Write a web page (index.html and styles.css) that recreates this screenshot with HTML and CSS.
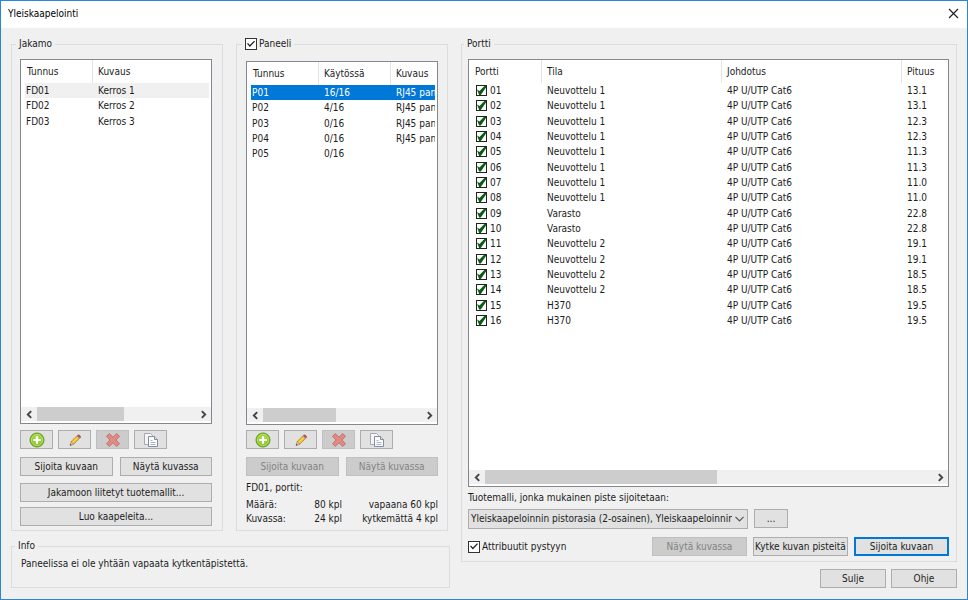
FILE: index.html
```html
<!DOCTYPE html>
<html lang="fi">
<head>
<meta charset="utf-8">
<title>Yleiskaapelointi</title>
<link rel="stylesheet" href="styles.css">
</head>
<body>
<svg class="defs" aria-hidden="true">
  <defs>
    <radialGradient id="green" cx="50%" cy="40%" r="60%">
      <stop offset="0" stop-color="#b4e052"/><stop offset="1" stop-color="#7cb81c"/>
    </radialGradient>
    <symbol id="i-add" viewBox="0 0 16 16">
      <circle cx="8" cy="8" r="7" fill="url(#green)" stroke="#5f9a17"/>
      <circle cx="8" cy="8" r="5.6" fill="none" stroke="#cdeb8b" stroke-width=".7"/>
      <path d="M8 4.2v7.6M4.2 8h7.6" stroke="#fff" stroke-width="2.2" fill="none"/>
    </symbol>
    <symbol id="i-edit" viewBox="0 0 16 16">
      <path d="M3 13.5l1.2-4 2.6 2.6z" fill="#e9cfa2" stroke="#6b5a45" stroke-width=".5"/>
      <path d="M3 13.5l.5-1.6 1.1 1.1z" fill="#333"/>
      <path d="M4.2 9.5L9.8 4l2.6 2.6-5.6 5.5z" fill="#f3bf2d" stroke="#a0700f" stroke-width=".6"/>
      <path d="M5.4 10.7l5.7-5.5" stroke="#fbe58a" stroke-width=".8"/>
      <path d="M9.6 4.2l1-1 2.6 2.6-1 1z" fill="#8d93a0"/>
      <path d="M10.5 3.3c1.2-1.4 4 1 2.8 2.5z" fill="#d9483b" stroke="#9d2f27" stroke-width=".5"/>
    </symbol>
    <symbol id="i-delete" viewBox="0 0 16 16">
      <path d="M4.2 1.6L8 5.2l3.8-3.6 2.7 2.7L10.9 8l3.6 3.7-2.7 2.7L8 10.8l-3.8 3.6-2.7-2.7L5.1 8 1.5 4.3z" fill="#df8a82" stroke="#c4736d" stroke-linejoin="round"/>
    </symbol>
    <symbol id="i-copy" viewBox="0 0 16 16">
      <path d="M1.5 1.5h6l2 2v9h-8z" fill="#f4f5f7" stroke="#a4a8b0"/>
      <path d="M5.5 4.500h6l3 3v7h-9z" fill="#fbfcfe" stroke="#858b98"/>
      <path d="M11.5 4.500v3h3" fill="#dfe3ec" stroke="#858b98"/>
      <path d="M7.5 8.500h2M7.500 10.500h5M7.500 12.500h5" stroke="#a9b4d0"/>
    </symbol>
    <symbol id="i-left" viewBox="0 0 8 8"><path d="M5.5 1L2.500 4l3 3" fill="none" stroke="#444" stroke-width="1.7"/></symbol>
    <symbol id="i-right" viewBox="0 0 8 8"><path d="M2.5 1l3 3-3 3" fill="none" stroke="#444" stroke-width="1.7"/></symbol>
  </defs>
</svg>

<div class="window">
  <header class="titlebar">
    <h1>Yleiskaapelointi</h1>
    <button class="close" type="button" aria-label="Sulje ikkuna">
      <svg width="11" height="11" viewBox="0 0 11 11"><path d="M1 1l9 9M10 1l-9 9" stroke="#222" stroke-width="1.2" fill="none"/></svg>
    </button>
  </header>

  <main class="content">
    <div class="left">
      <div class="groups">
        <fieldset class="group cabinet">
          <legend>Jakamo</legend>
          <div class="list">
            <div class="view">
              <table>
                <colgroup><col class="c-id"><col></colgroup>
                <thead><tr><th>Tunnus</th><th>Kuvaus</th></tr></thead>
                <tbody>
                  <tr class="current"><td>FD01</td><td>Kerros 1</td></tr>
                  <tr><td>FD02</td><td>Kerros 2</td></tr>
                  <tr><td>FD03</td><td>Kerros 3</td></tr>
                </tbody>
              </table>
            </div>
            <div class="scroll">
              <button type="button" aria-label="Vieritä vasemmalle"><svg><use href="#i-left"/></svg></button>
              <div class="track"><div class="thumb t-cabinet"></div></div>
              <button type="button" aria-label="Vieritä oikealle"><svg><use href="#i-right"/></svg></button>
            </div>
          </div>
          <div class="tools">
            <button class="btn" type="button" aria-label="Lisää"><svg><use href="#i-add"/></svg></button>
            <button class="btn" type="button" aria-label="Muokkaa"><svg><use href="#i-edit"/></svg></button>
            <button class="btn" type="button" aria-label="Poista" disabled><svg><use href="#i-delete"/></svg></button>
            <button class="btn" type="button" aria-label="Kopioi"><svg><use href="#i-copy"/></svg></button>
          </div>
          <div class="pair">
            <button class="btn" type="button">Sijoita kuvaan</button>
            <button class="btn" type="button">Näytä kuvassa</button>
          </div>
          <div class="stack">
            <button class="btn" type="button">Jakamoon liitetyt tuotemallit...</button>
            <button class="btn" type="button">Luo kaapeleita...</button>
          </div>
        </fieldset>

        <fieldset class="group panel">
          <legend><label class="check"><input type="checkbox" checked>Paneeli</label></legend>
          <div class="list">
            <div class="view">
              <table>
                <colgroup><col class="c-id"><col class="c-use"><col></colgroup>
                <thead><tr><th>Tunnus</th><th>Käytössä</th><th>Kuvaus</th></tr></thead>
                <tbody>
                  <tr class="selected"><td>P01</td><td>16/16</td><td>RJ45 paneeli</td></tr>
                  <tr><td>P02</td><td>4/16</td><td>RJ45 paneeli</td></tr>
                  <tr><td>P03</td><td>0/16</td><td>RJ45 paneeli</td></tr>
                  <tr><td>P04</td><td>0/16</td><td>RJ45 paneeli</td></tr>
                  <tr><td>P05</td><td>0/16</td><td></td></tr>
                </tbody>
              </table>
            </div>
            <div class="scroll">
              <button type="button" aria-label="Vieritä vasemmalle"><svg><use href="#i-left"/></svg></button>
              <div class="track"><div class="thumb t-panel"></div></div>
              <button type="button" aria-label="Vieritä oikealle"><svg><use href="#i-right"/></svg></button>
            </div>
          </div>
          <div class="tools">
            <button class="btn" type="button" aria-label="Lisää"><svg><use href="#i-add"/></svg></button>
            <button class="btn" type="button" aria-label="Muokkaa"><svg><use href="#i-edit"/></svg></button>
            <button class="btn" type="button" aria-label="Poista" disabled><svg><use href="#i-delete"/></svg></button>
            <button class="btn" type="button" aria-label="Kopioi"><svg><use href="#i-copy"/></svg></button>
          </div>
          <div class="pair">
            <button class="btn" type="button" disabled>Sijoita kuvaan</button>
            <button class="btn" type="button" disabled>Näytä kuvassa</button>
          </div>
          <div class="stats">
            <p>FD01, portit:</p>
            <div class="counts">
              <span>Määrä:</span><span>80 kpl</span><span>vapaana 60 kpl</span>
              <span>Kuvassa:</span><span>24 kpl</span><span>kytkemättä 4 kpl</span>
            </div>
          </div>
        </fieldset>
      </div>

      <fieldset class="group info">
        <legend>Info</legend>
        <p>Paneelissa ei ole yhtään vapaata kytkentäpistettä.</p>
      </fieldset>
    </div>

    <div class="right">
      <fieldset class="group ports">
        <legend>Portti</legend>
        <div class="list">
          <div class="view">
            <table>
              <colgroup><col class="c-port"><col class="c-wide"><col class="c-wide"><col></colgroup>
              <thead><tr><th>Portti</th><th>Tila</th><th>Johdotus</th><th>Pituus</th></tr></thead>
              <tbody>
                <tr><td><label><input type="checkbox" checked>01</label></td><td>Neuvottelu 1</td><td>4P U/UTP Cat6</td><td>13.1</td></tr>
                <tr><td><label><input type="checkbox" checked>02</label></td><td>Neuvottelu 1</td><td>4P U/UTP Cat6</td><td>13.1</td></tr>
                <tr><td><label><input type="checkbox" checked>03</label></td><td>Neuvottelu 1</td><td>4P U/UTP Cat6</td><td>12.3</td></tr>
                <tr><td><label><input type="checkbox" checked>04</label></td><td>Neuvottelu 1</td><td>4P U/UTP Cat6</td><td>12.3</td></tr>
                <tr><td><label><input type="checkbox" checked>05</label></td><td>Neuvottelu 1</td><td>4P U/UTP Cat6</td><td>11.3</td></tr>
                <tr><td><label><input type="checkbox" checked>06</label></td><td>Neuvottelu 1</td><td>4P U/UTP Cat6</td><td>11.3</td></tr>
                <tr><td><label><input type="checkbox" checked>07</label></td><td>Neuvottelu 1</td><td>4P U/UTP Cat6</td><td>11.0</td></tr>
                <tr><td><label><input type="checkbox" checked>08</label></td><td>Neuvottelu 1</td><td>4P U/UTP Cat6</td><td>11.0</td></tr>
                <tr><td><label><input type="checkbox" checked>09</label></td><td>Varasto</td><td>4P U/UTP Cat6</td><td>22.8</td></tr>
                <tr><td><label><input type="checkbox" checked>10</label></td><td>Varasto</td><td>4P U/UTP Cat6</td><td>22.8</td></tr>
                <tr><td><label><input type="checkbox" checked>11</label></td><td>Neuvottelu 2</td><td>4P U/UTP Cat6</td><td>19.1</td></tr>
                <tr><td><label><input type="checkbox" checked>12</label></td><td>Neuvottelu 2</td><td>4P U/UTP Cat6</td><td>19.1</td></tr>
                <tr><td><label><input type="checkbox" checked>13</label></td><td>Neuvottelu 2</td><td>4P U/UTP Cat6</td><td>18.5</td></tr>
                <tr><td><label><input type="checkbox" checked>14</label></td><td>Neuvottelu 2</td><td>4P U/UTP Cat6</td><td>18.5</td></tr>
                <tr><td><label><input type="checkbox" checked>15</label></td><td>H370</td><td>4P U/UTP Cat6</td><td>19.5</td></tr>
                <tr><td><label><input type="checkbox" checked>16</label></td><td>H370</td><td>4P U/UTP Cat6</td><td>19.5</td></tr>
              </tbody>
            </table>
          </div>
          <div class="scroll">
            <button type="button" aria-label="Vieritä vasemmalle"><svg><use href="#i-left"/></svg></button>
            <div class="track"><div class="thumb t-ports"></div></div>
            <button type="button" aria-label="Vieritä oikealle"><svg><use href="#i-right"/></svg></button>
          </div>
        </div>
        <label class="caption" for="model">Tuotemalli, jonka mukainen piste sijoitetaan:</label>
        <div class="model">
          <div class="combo">
            <select id="model"><option>Yleiskaapeloinnin pistorasia (2-osainen), Yleiskaapeloinnin pistorasia</option></select>
            <svg width="9" height="6" viewBox="0 0 9 6" aria-hidden="true"><path d="M.5 .8l4 4 4-4" fill="none" stroke="#555" stroke-width="1.2"/></svg>
          </div>
          <button class="btn more" type="button">...</button>
        </div>
        <div class="actions">
          <label class="check"><input type="checkbox" checked>Attribuutit pystyyn</label>
          <button class="btn" type="button" disabled>Näytä kuvassa</button>
          <button class="btn" type="button">Kytke kuvan pisteitä</button>
          <button class="btn default" type="button">Sijoita kuvaan</button>
        </div>
      </fieldset>
      <footer class="footer">
        <button class="btn" type="button">Sulje</button>
        <button class="btn" type="button">Ohje</button>
      </footer>
    </div>
  </main>
</div>
</body>
</html>
```
FILE: styles.css
```css
* { box-sizing: border-box; }

body {
  margin: 0;
  background: #f0f0f0;
  color: #1c1c1c;
  font-family: "DejaVu Sans Condensed", "DejaVu Sans", sans-serif;
  font-size: 10px;
  line-height: 14px;
}

h1, p { margin: 0; }

button, input, select { font: inherit; color: inherit; margin: 0; }

.defs { position: absolute; width: 0; height: 0; }

.window {
  display: flex;
  flex-direction: column;
  min-height: 100vh;
  border: 1px solid #2a87d6;
}

.titlebar {
  display: flex;
  align-items: center;
  justify-content: space-between;
  height: 27px;
  padding: 0 8px 2px 7px;
  background: #fff;
}

.titlebar h1 {
  color: #000;
  font-size: 10px;
  font-weight: 400;
}

.close {
  display: flex;
  padding: 0;
  border: 0;
  background: none;
}

.content {
  flex: 1;
  display: grid;
  grid-template-columns: 439fr 496fr;
  gap: 11px;
  padding: 9px 10px 11px;
}

.left, .right { display: flex; flex-direction: column; min-width: 0; }

.groups {
  flex: 1;
  display: grid;
  grid-template-columns: 1fr 1fr;
  gap: 13px;
  padding-right: 2px;
}

.group {
  display: flex;
  flex-direction: column;
  min-width: 0;
  margin: 0;
  border: 1px solid #dcdcdc;
}

.group legend { height: 14px; padding: 0 3px; margin-left: -4px; }

.cabinet { padding: 8px 10px 4px 8px; }
.panel { padding: 10px 9px 4px; }
.ports { flex: 1; padding: 8px 7px 5px 6px; }
.info { height: 49px; margin-top: 8px; padding: 4px 7px; }
.info p { padding-left: 2px; }

.list {
  flex: 1;
  display: flex;
  flex-direction: column;
  min-height: 0;
  border: 1px solid #828790;
  background: #fff;
}

.view { flex: 1; margin: 0 2px 0 4px; overflow: hidden; }

table {
  width: 100%;
  table-layout: fixed;
  border-collapse: separate;
  border-spacing: 0;
}

.c-id { width: 67px; }
.c-use { width: 72px; }
.c-port { width: 68px; }
.c-wide { width: 180px; }

th, td {
  padding: 0 0 0 6px;
  overflow: hidden;
  white-space: nowrap;
  text-align: left;
  font-weight: 400;
  vertical-align: middle;
}

th { height: 23px; padding-left: 5px; border-left: 1px solid #e3e3e3; }
th:first-child { padding-left: 2px; border-left: 0; }
td { height: 15px; line-height: 15px; }
td:first-child { padding-left: 1px; }
tr:nth-child(3n) td { height: 16px; }

.current { background: #f0f0f0; }
.selected { background: #0078d7; color: #fff; }

td label { display: flex; align-items: center; gap: 3px; padding-left: 2px; }

td input {
  position: relative;
  flex: none;
  width: 11px;
  height: 11px;
  appearance: none;
  border: 1px solid #222;
  background: #fff;
}

td input:checked::after {
  content: "";
  position: absolute;
  inset: 0;
  background: #0b5a12;
  clip-path: polygon(0 40%, 28% 55%, 82% 0, 100% 0, 100% 18%, 42% 100%, 24% 100%);
}

.scroll { display: flex; height: 16px; padding-bottom: 2px; background: #fff; }

.scroll button {
  display: flex;
  align-items: center;
  justify-content: center;
  width: 16px;
  padding: 0;
  border: 0;
  background: #f0f0f0;
}

.scroll svg { width: 9px; height: 9px; }
.track { flex: 1; background: #f0f0f0; }
.thumb { height: 100%; background: #cdcdcd; }
.t-cabinet { width: 55%; }
.t-panel { width: 46%; }
.t-ports { width: 52%; }

.btn {
  display: flex;
  align-items: center;
  justify-content: center;
  height: 19px;
  padding: 0;
  border: 1px solid #adadad;
  background: #e1e1e1;
  white-space: nowrap;
}

.btn:disabled { border-color: #bfbfbf; background: #ccc; color: #838383; }
.default { border: 2px solid #0078d7; }

.tools { display: flex; gap: 5px; margin-top: 6px; }
.panel .tools { margin-top: 5px; }
.tools .btn { width: 33px; }
.tools svg { width: 16px; height: 16px; }

.pair {
  display: grid;
  grid-template-columns: 1fr 1fr;
  gap: 7px;
  margin-top: 8px;
}

.stack { display: grid; gap: 5px; margin-top: 7px; }

.stats { height: 45px; margin-top: 5px; }

.counts {
  display: grid;
  grid-template-columns: 1fr 1fr 2fr;
  margin-top: 3px;
}

.counts span:not(:nth-child(3n + 1)) { text-align: right; }

.check { display: flex; align-items: center; gap: 2px; }

.check input {
  position: relative;
  width: 12px;
  height: 12px;
  appearance: none;
  border: 1px solid #333;
  background: #fff;
}

.check input:checked::after {
  content: "";
  position: absolute;
  inset: 1px;
  background: #222;
  clip-path: polygon(0 48%, 12% 38%, 36% 64%, 88% 8%, 100% 18%, 36% 88%);
}

.caption { margin-top: 4px; }

.model { display: flex; gap: 6px; margin-top: 4px; }

.combo { position: relative; width: 280px; }

.combo select {
  display: block;
  width: 100%;
  height: 20px;
  padding: 0 15px 0 2px;
  appearance: none;
  border: 1px solid #adadad;
  border-radius: 0;
  background: #e1e1e1;
}

.combo svg { position: absolute; top: 7px; right: 4px; }
.more { width: 34px; }

.actions { display: flex; gap: 6px; margin-top: 8px; }
.actions .check { flex: 1; }
.actions .btn { width: 95px; }

.footer {
  display: flex;
  justify-content: flex-end;
  gap: 5px;
  margin-top: 7px;
}

.footer .btn { width: 66px; }
```
